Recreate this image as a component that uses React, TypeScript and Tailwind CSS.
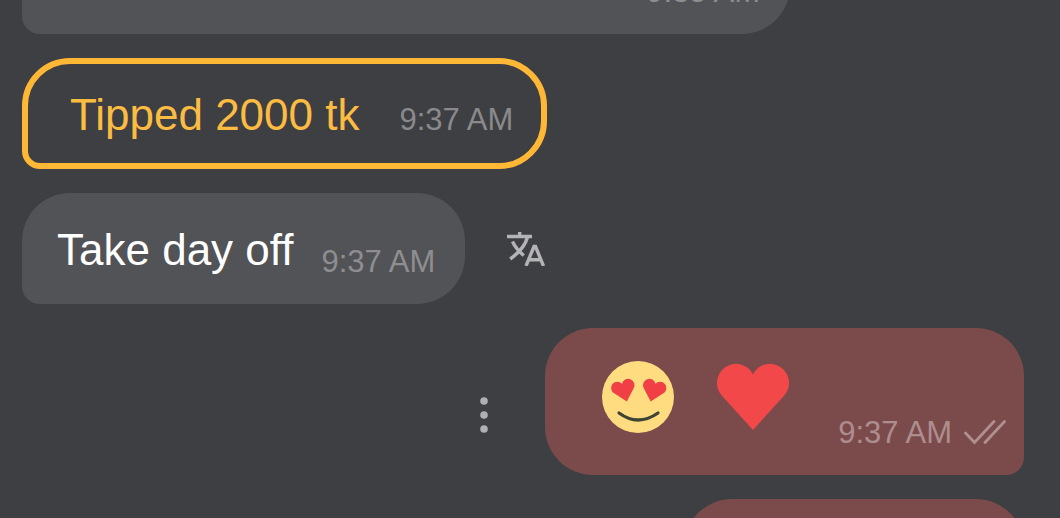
import type { ReactNode } from 'react';

import { clsx } from 'clsx';

interface BubbleProps {
  className?: string;
  children?: ReactNode;
}

function IncomingBubble({ className, children }: BubbleProps) {
  return (
    <div
      className={clsx(
        'flex items-end rounded-[48px] rounded-bl-[18px] bg-[#525356] pt-[33px] pr-[30px] pb-6 pl-[35px]',
        className,
      )}
    >
      {children}
    </div>
  );
}

function OutgoingBubble({ className, children }: BubbleProps) {
  return (
    <div
      className={clsx(
        'flex items-end rounded-[48px] rounded-br-[18px] bg-[#7b4b4c] pt-[33px] pr-[18px] pb-6 pl-[57px]',
        className,
      )}
    >
      {children}
    </div>
  );
}

function Time({ value, className }: { value: string; className: string }) {
  return (
    <time className={clsx('shrink-0 text-[31px] leading-[36px] whitespace-nowrap', className)}>
      {value}
    </time>
  );
}

const HEART = 'M36 66 L5.4 32.2 A19 19 0 1 1 36 10.5 A19 19 0 1 1 66.6 32.2 Z';

function HeartEyes() {
  return (
    <svg viewBox="0 0 72 72" className="size-[72px]" role="img" aria-label="Heart eyes">
      <circle cx="36" cy="36" r="36" fill="#ffdc7f" />
      <g fill="#f04045">
        <path d={HEART} transform="translate(22 30) rotate(-15) scale(.33) translate(-36 -33)" />
        <path d={HEART} transform="translate(51.5 30) rotate(15) scale(.33) translate(-36 -33)" />
      </g>
      <path
        d="M17 52 Q36 66 56 52"
        fill="none"
        stroke="#3f4434"
        strokeWidth="3.2"
        strokeLinecap="round"
      />
    </svg>
  );
}

function Heart() {
  return (
    <svg viewBox="0 0 72 68" className="h-[68px] w-[72px]" role="img" aria-label="Heart">
      <path d={HEART} transform="translate(0 1)" fill="#f34849" />
    </svg>
  );
}

function DoubleCheck() {
  return (
    <svg
      viewBox="0 0 42 26"
      className="h-[26px] w-[42px]"
      fill="none"
      stroke="#b08f90"
      strokeWidth="2.8"
      strokeLinecap="round"
      role="img"
      aria-label="Read"
    >
      <path d="M1.5 13 L10.5 22.5 L30 1.5" />
      <path d="M21 22.5 L40.5 1.5" />
    </svg>
  );
}

function TranslateIcon() {
  return (
    <svg
      viewBox="0 0 38 34"
      className="h-[34px] w-[38px]"
      fill="none"
      stroke="#b4b4b6"
      strokeWidth="3.4"
      aria-hidden="true"
    >
      <path d="M0 4.5 H25 M12.7 0 V4.5" />
      <path d="M20.5 5 C18.5 13 13 20 3.2 27" />
      <path d="M5.5 9.5 C8 15 12 19.5 16.8 23.5" />
      <path d="M19 34 L27 14.5 H28.5 L36.5 34 M21.5 27.7 H34" />
    </svg>
  );
}

export default function App() {
  return (
    <main className="h-screen overflow-hidden bg-[#3e3f42] font-['Liberation_Sans',Arial,sans-serif]">
      <div className="-mt-[77px] flex flex-col gap-6 pr-9 pl-[22px]">
        <IncomingBubble className="h-[111px] w-full max-w-[768px] justify-end self-start">
          <Time value="9:35 AM" className="text-[#8e8e91]" />
        </IncomingBubble>

        <div className="flex items-baseline gap-10 self-start rounded-[48px] rounded-bl-[18px] border-[6px] border-[#ffb835] pt-[27px] pr-[28px] pb-6 pl-[42px]">
          <p className="text-[44px] leading-[48px] text-[#fcbc42]">Tipped 2000 tk</p>
          <Time value="9:37 AM" className="text-[#8a8a8c]" />
        </div>

        <div className="flex items-center gap-[42px] self-start">
          <IncomingBubble className="gap-7">
            <p className="mb-[6px] text-[44px] leading-[48px] text-white">Take day off</p>
            <Time value="9:37 AM" className="text-[#8e8e91]" />
          </IncomingBubble>
          <button type="button" aria-label="Translate message">
            <TranslateIcon />
          </button>
        </div>

        <div className="flex items-center gap-10 self-end">
          <button type="button" aria-label="Message options" className="px-4 pt-[26px]">
            <svg viewBox="0 0 10 36" className="h-9 w-[10px]" fill="#b0b0b2">
              <circle cx="5" cy="4" r="3.8" />
              <circle cx="5" cy="18" r="3.8" />
              <circle cx="5" cy="32" r="3.8" />
            </svg>
          </button>
          <OutgoingBubble>
            <div className="mb-[18px] flex items-center gap-[43px]">
              <HeartEyes />
              <Heart />
            </div>
            <div className="ml-[49px] flex items-center gap-3">
              <Time value="9:37 AM" className="text-[#ae8d8e]" />
              <DoubleCheck />
            </div>
          </OutgoingBubble>
        </div>

        <OutgoingBubble className="h-[111px] w-[340px] self-end" />
      </div>
    </main>
  );
}
